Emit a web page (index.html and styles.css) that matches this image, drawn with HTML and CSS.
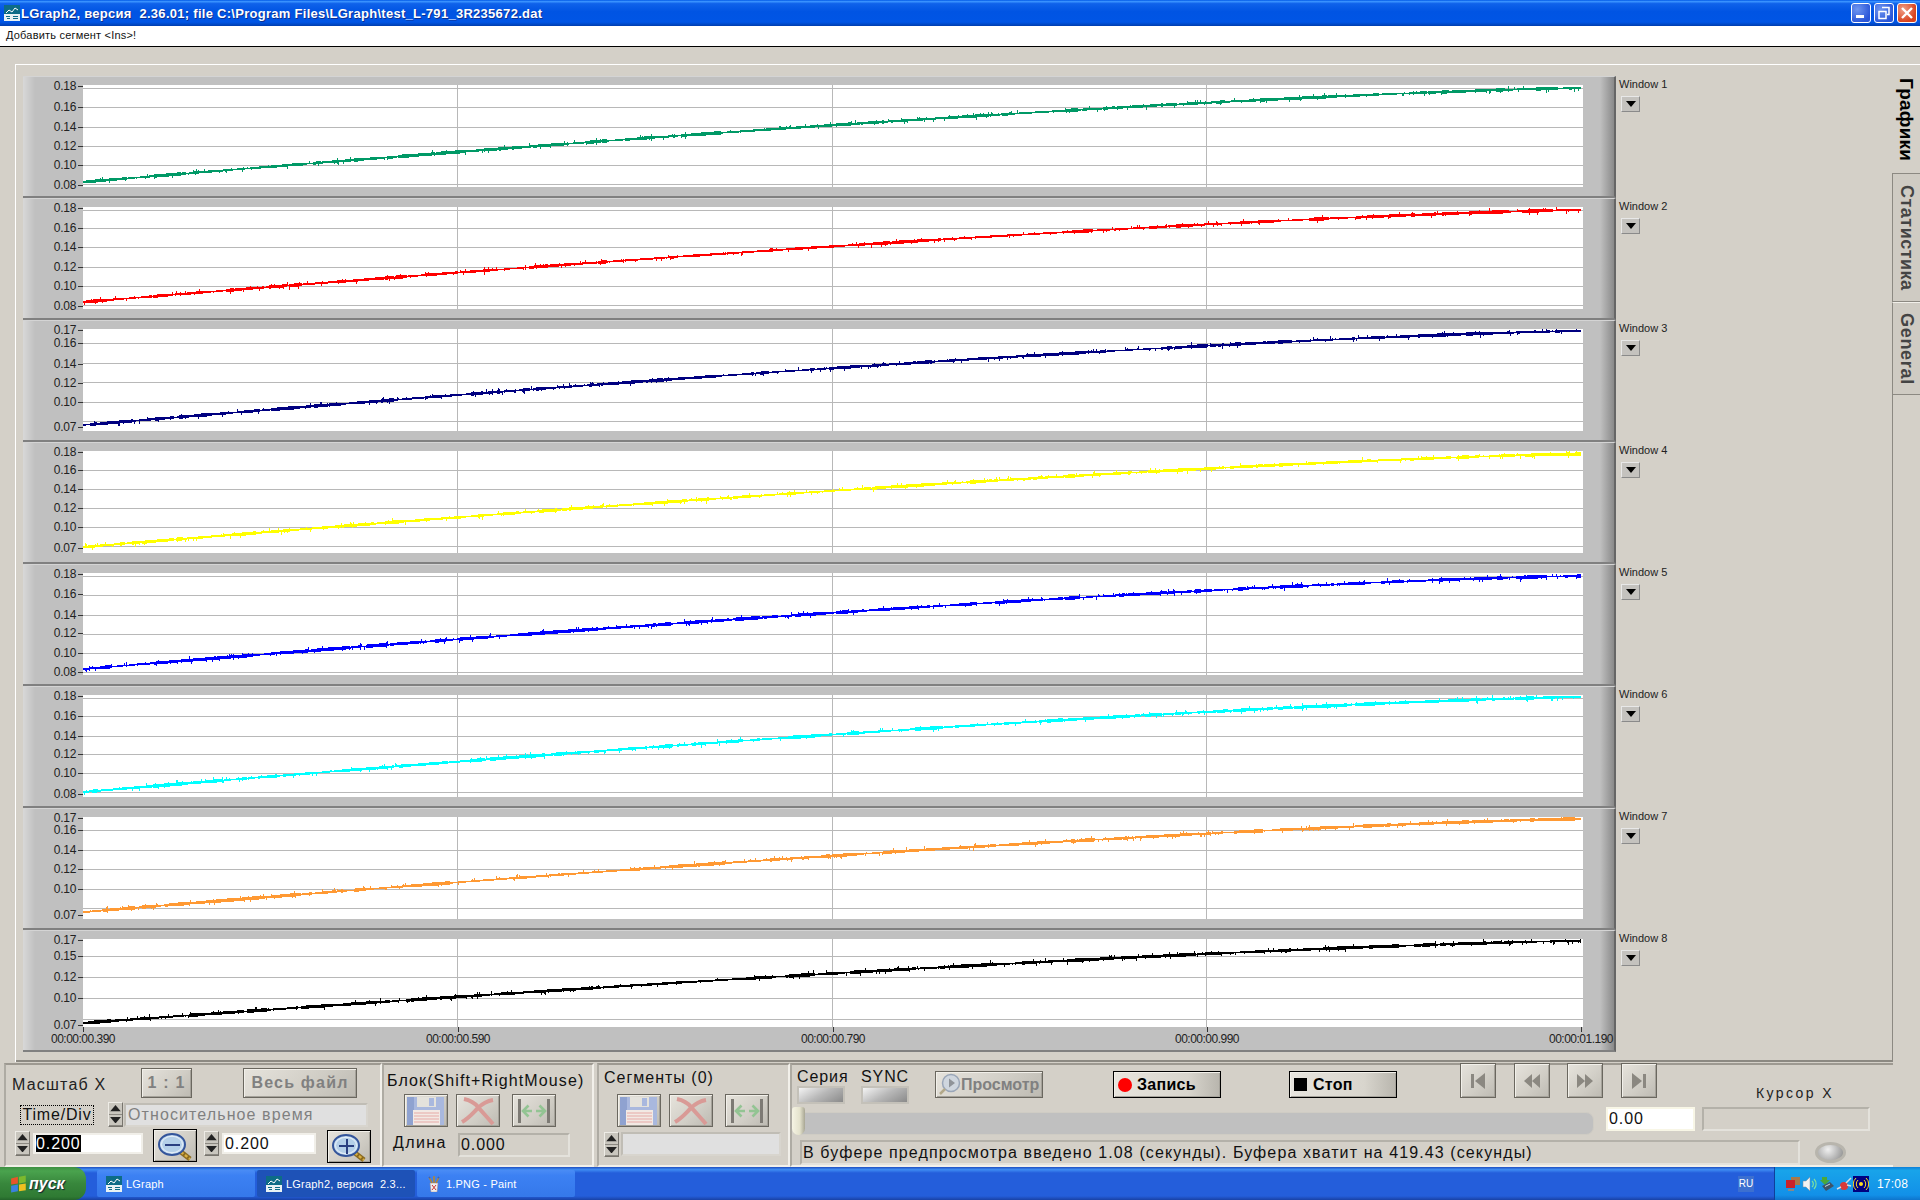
FILE: index.html
```html
<!DOCTYPE html>
<html lang="ru">
<head>
  <meta charset="UTF-8">
  <title>LGraph2</title>
  <link rel="stylesheet" href="styles.css">
</head>
<body>
  <!-- shared icons -->
  <svg class="icon-defs" width="0" height="0">
    <symbol id="app-icon" viewBox="0 0 16 16">
      <rect width="16" height="16" fill="#0d6c86"/>
      <rect y="9" width="16" height="7" fill="#e8f2f4"/>
      <path d="M2 8l3-3 3 2 3-4 3 2" fill="none" stroke="#fff" stroke-width="1"/>
      <path d="M3 2h1v1H3zM7 1h1v1H7zM11 1h2v1h-2zM2 11h4v1H2zM3 13h3v1H3zM9 11h5v1H9zM9 13h5v1H9z" fill="#0d6c86"/>
    </symbol>
    <symbol id="zoom-glass" viewBox="0 0 36 28">
      <path d="M23 19l9 7" stroke="#8a6a20" stroke-width="5"/>
      <path d="M23 19l9 7" stroke="#d9b040" stroke-width="2.4" stroke-dasharray="3 2"/>
      <ellipse cx="14" cy="11.500" rx="13" ry="10.500" fill="#c6dcf0" stroke="#34559b" stroke-width="2"/>
      <ellipse cx="14" cy="11.500" rx="10.500" ry="8.200" fill="#b4cfe8" stroke="#e6f0f8" stroke-width="1"/>
    </symbol>
    <symbol id="save-icon" viewBox="0 0 38 28">
      <rect x="1" y="0" width="36" height="28" fill="#a9b8de"/>
      <rect x="0" y="0" width="7" height="28" fill="#8fa2d0"/>
      <rect x="10" y="0" width="19" height="10" fill="#e4e2dc"/>
      <rect x="22" y="1" width="5" height="8" fill="#a9b8de"/>
      <rect x="6" y="13" width="27" height="15" fill="#f2e9e4"/>
      <path d="M7 16h25M7 19h25M7 22h25M7 25h25" stroke="#e6a9a6" stroke-width="1"/>
    </symbol>
    <symbol id="cancel-icon" viewBox="0 0 38 28">
      <path d="M5 2c5 1 10 3 14 8 5 6 10 11 15 17M3 25c7-4 10-8 16-14 4-4 9-7 15-8" fill="none" stroke="#d99a96" stroke-width="4"/>
    </symbol>
    <symbol id="span-icon" viewBox="0 0 38 28">
      <rect x="3" y="2" width="3" height="24" fill="#7d7a74"/>
      <rect x="32" y="2" width="3" height="24" fill="#7d7a74"/>
      <path d="M8 14h9M13.500 8.500L8 14l5.500 5.500M30 14h-9M24.500 8.500L30 14l-5.500 5.500" fill="none" stroke="#93c493" stroke-width="2.600"/>
    </symbol>
    <symbol id="tri-down" viewBox="0 0 10 6">
      <path d="M0 0h10L5 6z" fill="currentColor"/>
    </symbol>
    <symbol id="tri-up" viewBox="0 0 10 6">
      <path d="M5 0l5 6H0z" fill="currentColor"/>
    </symbol>
  </svg>

  <header class="titlebar">
    <svg class="title-icon"><use href="#app-icon"/></svg>
    <span class="title-text">LGraph2, версия  2.36.01; file C:\Program Files\LGraph\test_L-791_3R235672.dat</span>
    <div class="win-buttons">
      <button class="win-btn">
        <svg viewBox="0 0 18 18" width="18" height="18"><rect x="4" y="11" width="8" height="3" fill="#fff"/></svg>
      </button>
      <button class="win-btn">
        <svg viewBox="0 0 18 18" width="18" height="18"><path d="M7 3.500h7v7h-2M4 7.500h7v7H4z" fill="none" stroke="#fff" stroke-width="1.500"/></svg>
      </button>
      <button class="win-btn win-close">
        <svg viewBox="0 0 18 18" width="18" height="18"><path d="M4 4l10 10M14 4L4 14" stroke="#fff" stroke-width="2.400"/></svg>
      </button>
    </div>
  </header>
  <div class="hintbar">Добавить сегмент &lt;Ins&gt;!</div>

  <main class="workspace">
    <div class="tab-panel">
      <!-- rows are filled by charts.js -->
      <section class="plots" id="plots"></section>
      <nav class="tabs">
        <div class="tab tab-active">Графики</div>
        <div class="tab tab-stat">Статистика</div>
        <div class="tab tab-general">General</div>
        <div class="tab-rest"></div>
      </nav>
    </div>

    <div class="controls">
      <!-- X scale -->
      <div class="group group-scale">
        <div class="scale-row scale-top">
          <span class="big-label">Масштаб X</span>
          <button class="lv-btn gray-text btn-ratio">1 : 1</button>
          <button class="lv-btn gray-text btn-all">Весь файл</button>
        </div>
        <div class="scale-row scale-mid">
          <span class="time-div">Time/Div</span>
          <div class="spinner"><svg><use href="#tri-up"/></svg><svg><use href="#tri-down"/></svg></div>
          <div class="field field-gray field-time">Относительное время</div>
        </div>
        <div class="scale-row scale-bottom">
          <div class="spinner"><svg><use href="#tri-up"/></svg><svg><use href="#tri-down"/></svg></div>
          <div class="field field-white field-left"><span class="selected-text">0.200</span></div>
          <button class="lv-btn black-edge btn-zoom">
            <svg class="glass"><use href="#zoom-glass"/></svg>
            <span class="glass-sign glass-minus"></span>
          </button>
          <div class="spinner"><svg><use href="#tri-up"/></svg><svg><use href="#tri-down"/></svg></div>
          <div class="field field-white field-right">0.200</div>
          <button class="lv-btn black-edge btn-zoom btn-zoom-in">
            <svg class="glass"><use href="#zoom-glass"/></svg>
            <span class="glass-sign glass-plus"></span>
          </button>
        </div>
      </div>

      <!-- selection block -->
      <div class="group group-block">
        <div class="group-title">Блок(Shift+RightMouse)</div>
        <div class="icon-row">
          <button class="lv-btn icon-btn"><svg><use href="#save-icon"/></svg></button>
          <button class="lv-btn icon-btn"><svg><use href="#cancel-icon"/></svg></button>
          <button class="lv-btn icon-btn icon-btn-last"><svg><use href="#span-icon"/></svg></button>
        </div>
        <div class="length-row">
          <span class="length-label">Длина</span>
          <div class="field field-sunken">0.000</div>
        </div>
      </div>

      <!-- segments -->
      <div class="group group-segments">
        <div class="group-title">Сегменты (0)</div>
        <div class="icon-row">
          <button class="lv-btn icon-btn"><svg><use href="#save-icon"/></svg></button>
          <button class="lv-btn icon-btn"><svg><use href="#cancel-icon"/></svg></button>
          <button class="lv-btn icon-btn icon-btn-last"><svg><use href="#span-icon"/></svg></button>
        </div>
        <div class="segment-row">
          <div class="spinner"><svg><use href="#tri-up"/></svg><svg><use href="#tri-down"/></svg></div>
          <div class="field field-gray field-segment"></div>
        </div>
      </div>

      <!-- playback -->
      <div class="group group-play">
        <div class="play-top">
          <div class="indicator"><span>Серия</span><div class="led-rect"></div></div>
          <div class="indicator indicator-sync"><span>SYNC</span><div class="led-rect"></div></div>
          <button class="lv-btn gray-text btn-preview">
            <svg viewBox="0 0 24 24" width="24" height="24"><circle cx="14" cy="10" r="8.500" fill="#cfd6de" stroke="#9aa6b8" stroke-width="1.500"/><path d="M12 5.500l6 4.500-6 4.500z" fill="#8f9398"/><path d="M8 16l-5 5" stroke="#b3a98a" stroke-width="2.500"/></svg>
            <span>Просмотр</span>
          </button>
          <button class="lv-btn black-edge btn-action btn-record"><i class="rec-dot"></i>Запись</button>
          <button class="lv-btn black-edge btn-action btn-stop"><i class="stop-box"></i>Стоп</button>
          <div class="nav-buttons">
            <button class="lv-btn nav-btn"><svg viewBox="0 0 20 20" width="20" height="20"><path d="M3 3h3v14H3zM17 2v16L7 10z" fill="#8b8881"/></svg></button>
            <button class="lv-btn nav-btn"><svg viewBox="0 0 20 20" width="20" height="20"><path d="M10 3v14L2 10zM18 3v14l-8-7z" fill="#8b8881"/></svg></button>
            <button class="lv-btn nav-btn"><svg viewBox="0 0 20 20" width="20" height="20"><path d="M2 3v14l8-7zM10 3v14l8-7z" fill="#8b8881"/></svg></button>
            <button class="lv-btn nav-btn"><svg viewBox="0 0 20 20" width="20" height="20"><path d="M3 2v16l10-8zM14 3h3v14h-3z" fill="#8b8881"/></svg></button>
          </div>
          <div class="cursor-label">Курсор X</div>
        </div>
        <div class="play-mid">
          <div class="slider"><div class="slider-thumb"></div></div>
          <div class="field field-cream">0.00</div>
          <div class="field field-sunken field-cursor"></div>
        </div>
        <div class="play-bottom">
          <div class="field field-sunken field-status">В буфере предпросмотра введено 1.08 (секунды). Буфера хватит на 419.43 (секунды)</div>
          <div class="round-led"></div>
        </div>
      </div>
    </div>
  </main>

  <footer class="taskbar">
    <button class="start-btn">
      <svg viewBox="0 0 16 16" width="18" height="18">
        <path d="M1 3l6-1.500v6L1 8.500z" fill="#e8552a"/>
        <path d="M8 1.500l6-1v6l-6 1z" fill="#7cb92e"/>
        <path d="M1 9.500l6-1v6l-6 1z" fill="#3b82e0"/>
        <path d="M8 8.500l6-1v6l-6 1z" fill="#f0c020"/>
      </svg>
      <span>пуск</span>
    </button>
    <div class="task-list">
      <div class="task"><svg class="task-icon"><use href="#app-icon"/></svg>LGraph</div>
      <div class="task task-active"><svg class="task-icon"><use href="#app-icon"/></svg>LGraph2, версия  2.3...</div>
      <div class="task"><svg class="task-icon" viewBox="0 0 16 16">
          <path d="M4 7h8l-1 9H5z" fill="#eee" stroke="#a88" stroke-width="0.500"/>
          <path d="M6 9l4 5M10 9l-4 5" stroke="#c33" stroke-width="1"/>
          <path d="M6 7L3 1M8 7V0M10 7l3-6" stroke="#b8862c" stroke-width="1.500"/>
          <path d="M3 1l1 1M13 1l-1 1" stroke="#2a5fd0" stroke-width="1.500"/>
        </svg>1.PNG - Paint</div>
    </div>
    <span class="lang">RU</span>
    <div class="tray">
      <svg viewBox="0 0 16 16" width="16" height="16"><rect x="6" y="1" width="9" height="8" fill="#a8794a"/><rect x="1" y="4" width="9" height="8" fill="#c9222a"/><path d="M3 14h6" stroke="#888" stroke-width="2"/></svg>
      <svg viewBox="0 0 16 16" width="16" height="16"><path d="M1 5h3l4-4v14l-4-4H1z" fill="#f2f2f2" stroke="#7a8a9a" stroke-width="0.500"/><path d="M10 5a4 4 0 0 1 0 6M12 3a7 7 0 0 1 0 10" fill="none" stroke="#7ee0a0" stroke-width="1.200"/></svg>
      <svg viewBox="0 0 16 16" width="16" height="16"><path d="M3 1h5v3h3l-5 5-5-5h2z" fill="#4aa83a"/><path d="M3 10l8-4 4 4-8 5z" fill="#3e5468"/><path d="M6 10.500l5-2.500" stroke="#cdd" stroke-width="1"/></svg>
      <svg viewBox="0 0 16 16" width="16" height="16"><circle cx="8" cy="10" r="4" fill="#d83a3a"/><path d="M1 13l4-2M10 7l5-5M11 9l4 1" stroke="#d8dce2" stroke-width="1.500"/></svg>
      <svg viewBox="0 0 16 16" width="16" height="16"><rect width="16" height="16" fill="#000080"/><circle cx="8" cy="8" r="2" fill="#ffe020"/><path d="M5 4a5.500 5.500 0 0 0 0 8M11 4a5.500 5.500 0 0 1 0 8M3 2a8 8 0 0 0 0 12M13 2a8 8 0 0 1 0 12" fill="none" stroke="#ffe020" stroke-width="1"/></svg>
      <span class="clock">17:08</span>
    </div>
  </footer>

  <script src="charts.js"></script>
</body>
</html>
```

FILE: styles.css
```css
* {
  box-sizing: border-box;
}

html, body {
  margin: 0;
  height: 1200px;
  overflow: hidden;
}

body {
  display: flex;
  flex-direction: column;
  background: #d4d0c8;
  font-family: "Liberation Sans", Arial, sans-serif;
  color: #111;
}

button {
  font-family: inherit;
  padding: 0;
}

.icon-defs {
  position: absolute;
}

/* Window title */
.titlebar {
  height: 26px;
  display: flex;
  align-items: center;
  padding: 0 3px 0 4px;
  background: linear-gradient(#0058e6 0%, #3a93ff 6%, #0f62ea 14%, #0054e3 45%, #0055e5 85%, #0049c8 93%, #003dae 100%);
}

.title-icon {
  width: 16px;
  height: 16px;
}

.title-text {
  margin-left: 1px;
  color: #fff;
  font-size: 13px;
  font-weight: bold;
  letter-spacing: 0.28px;
  white-space: pre;
  text-shadow: 1px 1px 0 #0f2f90;
}

.win-buttons {
  margin-left: auto;
  display: flex;
  gap: 3px;
}

.win-btn {
  width: 20px;
  height: 20px;
  border: 1px solid #fff;
  border-radius: 3px;
  background: radial-gradient(circle at 30% 30%, #6f96f0, #2a56d8 75%);
  display: flex;
  align-items: center;
  justify-content: center;
}

.win-close {
  background: radial-gradient(circle at 30% 30%, #f0a088, #d9431f 70%);
}

.hintbar {
  height: 21px;
  padding: 1px 0 0 6px;
  background: #fff;
  border-bottom: 1px solid #000;
  font-size: 11px;
  letter-spacing: 0.2px;
  line-height: 16px;
}

.workspace {
  flex: 1;
  padding-top: 17px;
}

/* Tab control around the charts */
.tab-panel {
  height: 998px;
  margin-left: 15px;
  display: flex;
  border-top: 1px solid #fff;
  border-left: 1px solid #fff;
}

.plots {
  width: 1877px;
  padding: 11px 0 0 7px;
  border-bottom: 2px solid #8c8982;
}

.chart-row {
  display: flex;
  height: 122px;
}

.chart {
  position: relative;
  width: 1593px;
  height: 122px;
  background: linear-gradient(90deg, #d8d8d8 0, #c0c0c0 12px, #c0c0c0 calc(100% - 14px), #8a8a8a 100%);
  border-top: 1px solid #d4d4d4;
  border-right: 2px solid #666;
  border-bottom: 2px solid #808080;
}

.plot {
  position: absolute;
  left: 60px;
  top: 8px;
  width: 1500px;
  height: 102px;
  background: #fff;
}

.plot-last {
  height: 88px;
}

.plot svg {
  display: block;
}

.y-tick {
  position: absolute;
  right: 100%;
  transform: translateY(-50%);
  display: flex;
  align-items: center;
  gap: 2px;
  font-size: 12px;
  letter-spacing: -0.3px;
  line-height: 14px;
  color: #222;
}

.y-tick::after {
  content: "";
  width: 5px;
  height: 1px;
  background: #333;
}

.x-tick {
  position: absolute;
  top: 100%;
  width: 1px;
  height: 5px;
  background: #333;
}

.x-label {
  position: absolute;
  top: 100%;
  margin-top: 5px;
  transform: translateX(-50%);
  font-size: 12px;
  letter-spacing: -0.5px;
  line-height: 14px;
  color: #222;
}

.chart-side {
  padding: 0 0 0 3px;
}

.chart-name {
  font-size: 11px;
  line-height: 14px;
  margin-top: 1px;
  color: #222;
}

.chart-menu {
  display: flex;
  align-items: center;
  justify-content: center;
  width: 19px;
  height: 16px;
  margin: 5px 0 0 2px;
  color: #000;
  background: #c4c2be;
  border: 1px solid;
  border-color: #e8e8e8 #8a8a8a #8a8a8a #e8e8e8;
}

.chart-menu svg {
  width: 10px;
  height: 6px;
}

/* Tabs on the right edge */
.tabs {
  flex: 1;
  display: flex;
  flex-direction: column;
}

.tab {
  writing-mode: vertical-rl;
  font-weight: bold;
  font-size: 18px;
  line-height: 27px;
  text-align: center;
  color: #444;
  background: #cfcbc3;
  border: 1px solid #8c8982;
  border-right: 0;
}

.tab-active {
  height: 108px;
  padding: 13px 0 0 1px;
  text-align: start;
  color: #000;
  background: none;
  border: 0;
  font-size: 19px;
  letter-spacing: 0.2px;
}

.tab-stat {
  height: 129px;
  letter-spacing: 0.5px;
}

.tab-general {
  height: 93px;
  letter-spacing: 0.7px;
  border-top-color: #f2f0ea;
}

.tab-rest {
  flex: 1;
  border-left: 1px solid #8c8982;
}

/* Bottom control groups */
.controls {
  display: flex;
  height: 105px;
  padding: 1px 0 0 4px;
}

.group {
  height: 104px;
  border: 2px solid;
  border-color: #9d9991 #f2f0ea #f2f0ea #aeaba3;
}

.group-scale {
  width: 378px;
}

.group-block {
  width: 212px;
  padding: 2px 0 0 5px;
}

.group-segments {
  width: 193px;
  margin-left: 3px;
  padding: 1px 0 0 5px;
}

.group-play {
  flex: 1;
  margin-right: 27px;
  border-right: 0;
  padding-left: 5px;
}

.scale-row {
  display: flex;
  align-items: center;
}

.scale-top {
  height: 30px;
  margin-top: 3px;
  padding-left: 6px;
}

.big-label {
  width: 129px;
  margin-top: 4px;
  font-size: 16px;
  letter-spacing: 1.2px;
  color: #222;
}

.lv-btn {
  height: 100%;
  background: linear-gradient(135deg, #e6e3dc, #d0cdc5 60%, #bdbab2);
  border: 1px solid #6a675f;
  box-shadow: inset 1px 1px 0 #f2f0ea, inset -1px -1px 0 #a5a29a;
  color: #000;
}

.gray-text {
  font-weight: bold;
  color: #808080;
  font-size: 16px;
  letter-spacing: 1.2px;
}

.black-edge {
  border-color: #000;
}

.btn-ratio {
  width: 51px;
}

.btn-all {
  width: 114px;
  margin-left: 51px;
}

.scale-mid {
  height: 25px;
  margin-top: 4px;
  padding-left: 14px;
}

.time-div {
  width: 74px;
  height: 20px;
  border: 1px dotted #000;
  font-size: 16px;
  letter-spacing: 0.8px;
  line-height: 18px;
  text-align: center;
  white-space: nowrap;
  margin-right: 14px;
}

.spinner {
  display: flex;
  flex-direction: column;
  flex: none;
  width: 15px;
  height: 25px;
  color: #222;
  background: #c9c6be;
  border: 1px solid;
  border-color: #eeece6 #77746d #77746d #eeece6;
}

.spinner svg {
  flex: 1;
  width: 100%;
  height: 50%;
  padding: 2px 1px;
  border-bottom: 1px solid #8c8982;
}

.field {
  height: 24px;
  font-size: 16px;
  line-height: 20px;
  padding-left: 1px;
  letter-spacing: 0.9px;
  border: 2px solid;
  white-space: nowrap;
}

.field-gray {
  background: #e0e0e0;
  color: #808080;
  border-color: #c0bdb5 #d8d5ce #d8d5ce #c0bdb5;
}

.field-white {
  background: #fff;
  border-color: #f1efe9;
  height: 21px;
  line-height: 17px;
}

.field-sunken {
  background: #d4d0c8;
  border-color: #b4b1a9 #e4e2dc #e4e2dc #b4b1a9;
}

.field-time {
  width: 244px;
  margin-left: 1px;
  padding-left: 2px;
  letter-spacing: 1.1px;
}

.scale-bottom {
  height: 34px;
  margin-top: 2px;
  padding-left: 9px;
  align-items: flex-start;
}

.scale-bottom .spinner {
  margin-top: 2px;
}

.field-left {
  width: 110px;
  margin: 4px 10px 0 3px;
}

.field-right {
  width: 94px;
  margin: 4px 11px 0 3px;
}

.selected-text {
  display: inline-block;
  background: #000;
  color: #fff;
}

.btn-zoom {
  position: relative;
  width: 44px;
  height: 33px;
  margin-right: 7px;
}

.btn-zoom-in {
  margin-top: 1px;
}

.glass {
  position: absolute;
  left: 4px;
  top: 3px;
  width: 36px;
  height: 28px;
}

.glass-sign {
  position: absolute;
  left: 11px;
  top: 14px;
  width: 15px;
  height: 2px;
  background: #2a3f80;
}

.glass-plus::after {
  content: "";
  position: absolute;
  left: 6.500px;
  top: -6.500px;
  width: 2px;
  height: 15px;
  background: #2a3f80;
}

.group-title {
  font-size: 16px;
  line-height: 20px;
  height: 24px;
  letter-spacing: 1.1px;
  white-space: nowrap;
  color: #111;
}

.group-block .group-title {
  margin: 4px 0 -1px -2px;
}

.group-segments .group-title {
  margin-top: 2px;
  padding-left: 0;
  height: 26px;
  letter-spacing: 1px;
}

.icon-row {
  display: flex;
  height: 33px;
  padding-left: 13px;
}

.group-block .icon-row {
  padding-left: 15px;
}

.icon-btn {
  width: 44px;
  margin-right: 8px;
  padding: 2px;
  display: flex;
  align-items: center;
  justify-content: center;
}

.icon-btn svg {
  width: 38px;
  height: 28px;
}

.icon-btn-last {
  margin-left: 4px;
}

.length-row {
  display: flex;
  align-items: center;
  margin-top: 6px;
}

.length-label {
  width: 69px;
  padding-left: 4px;
  font-size: 16px;
  letter-spacing: 1.4px;
  margin-top: -5px;
}

.length-row .field {
  width: 112px;
}

.segment-row {
  display: flex;
  margin-top: 5px;
  padding-left: 0;
}

.field-segment {
  width: 160px;
  margin-left: 2px;
}

.play-top {
  position: relative;
  display: flex;
  height: 42px;
  padding-top: 6px;
}

.indicator {
  width: 64px;
  font-size: 16px;
  letter-spacing: 0.9px;
  margin-top: -3px;
}

.indicator span {
  display: block;
  line-height: 17px;
}

.indicator-sync {
  width: 74px;
}

.led-rect {
  width: 48px;
  height: 18px;
  margin-top: 1px;
  border: 2px solid #c4c1b9;
  background: linear-gradient(150deg, #f4f4f4, #b8b8b8 50%, #8a8a8a);
}

.btn-preview,
.btn-action {
  height: 27px;
  width: 108px;
  display: flex;
  align-items: center;
}

.btn-preview {
  letter-spacing: 0;
  font-size: 16px;
  gap: 0;
  overflow: hidden;
}

.btn-preview svg {
  margin-left: 1px;
  flex: none;
}

.btn-action {
  font-weight: bold;
  font-size: 16px;
  letter-spacing: 0.3px;
  padding-left: 3px;
  background: linear-gradient(90deg, #e8e5de, #d8d5cd 70%, #b8b5ad);
}

.btn-record {
  margin-left: 70px;
}

.btn-stop {
  margin-left: 68px;
}

.rec-dot {
  width: 14px;
  height: 14px;
  margin: 0 5px 0 1px;
  border-radius: 50%;
  background: #f00;
}

.stop-box {
  width: 13px;
  height: 13px;
  margin: 0 6px 0 1px;
  background: #000;
}

.nav-buttons {
  display: flex;
  gap: 17.500px;
  height: 35px;
  margin: -8px 0 0 63px;
}

.nav-btn {
  width: 36px;
  display: flex;
  align-items: center;
  justify-content: center;
}

.cursor-label {
  position: absolute;
  left: 959px;
  top: 20px;
  font-size: 14px;
  letter-spacing: 2.4px;
  white-space: nowrap;
  color: #222;
}

.play-mid {
  display: flex;
  align-items: flex-start;
  height: 34px;
}

.slider {
  position: relative;
  width: 797px;
  height: 23px;
  margin: 5px 0 0 0;
  background: #c0c0c0;
  border-radius: 0 8px 8px 0;
  border: 1px solid #cfccc4;
}

.slider-thumb {
  position: absolute;
  left: -6px;
  top: -6px;
  width: 13px;
  height: 28px;
  border-radius: 4px 4px 8px 8px;
  background: linear-gradient(90deg, #f6f4e4, #e4e2cc 60%, #a8a694);
}

.field-cream {
  width: 89px;
  height: 24px;
  line-height: 20px;
  margin-left: 12px;
  background: #fff;
  border-color: #f8f6e6;
}

.field-cursor {
  width: 168px;
  margin-left: 7px;
}

.play-bottom {
  display: flex;
  align-items: center;
  margin-top: -1px;
  padding-left: 3px;
}

.field-status {
  width: 1000px;
  height: 25px;
  line-height: 21px;
  letter-spacing: 1.11px;
}

.round-led {
  width: 31px;
  height: 21px;
  margin-left: 15px;
  border-radius: 50%;
  background: radial-gradient(circle at 40% 30%, #f0f0f0, #a8a8a8 70%, #888);
  border: 3px solid #b8b5ad;
}

/* Windows taskbar */
.taskbar {
  height: 33px;
  display: flex;
  align-items: center;
  background: linear-gradient(#1f4fc0 0, #3f8cf3 8%, #245edb 18%, #245edb 88%, #1941a5 100%);
  color: #fff;
  font-size: 11px;
}

.start-btn {
  width: 86px;
  height: 33px;
  display: flex;
  align-items: center;
  gap: 1px;
  padding-left: 10px;
  border: 0;
  border-radius: 0 12px 12px 0;
  background: linear-gradient(#3d8f42 0, #4aa34e 12%, #38873c 50%, #2f7a33 90%, #23642a 100%);
  color: #fff;
  font-size: 16px;
  font-weight: bold;
  font-style: italic;
  text-shadow: 1px 1px 1px #123;
}

.task-list {
  display: flex;
  gap: 2px;
  margin-left: 11px;
}

.task {
  width: 158px;
  height: 27px;
  display: flex;
  align-items: center;
  gap: 4px;
  padding-left: 9px;
  border-radius: 2px;
  background: linear-gradient(#4a8cf5, #3c81f3 20%, #3578ea);
  white-space: pre;
  letter-spacing: 0.2px;
}

.task-active {
  background: #1e52b7;
}

.task-icon {
  width: 16px;
  height: 16px;
  flex: none;
}

.lang {
  margin-left: auto;
  width: 16px;
  height: 16px;
  line-height: 16px;
  text-align: center;
  background: #3c6fd0;
  font-size: 10px;
}

.tray {
  width: 146px;
  height: 33px;
  margin-left: 20px;
  display: flex;
  align-items: center;
  gap: 1px;
  padding-left: 10px;
  border-left: 1px solid #0f3f9a;
  background: linear-gradient(#0c7fd8, #18a4ea 10%, #1290e8 85%, #0e74cc);
}

.clock {
  margin-left: 7px;
  font-size: 12px;
  letter-spacing: 0.2px;
}
```

FILE: charts.js
```js
// Eight stacked channel plots. Offsets are px from the top of each plot.
const rows = [
  { color: '#009966', y0: 97, y1: 3, grid: [3, 22, 42, 61, 80, 99],
    ticks: [['0.18', 1], ['0.16', 22], ['0.14', 42], ['0.12', 61], ['0.10', 80], ['0.08', 100]] },
  { color: '#ff0000', y0: 95, y1: 3, grid: [3, 21, 40, 60, 79, 98],
    ticks: [['0.18', 1], ['0.16', 21], ['0.14', 40], ['0.12', 60], ['0.10', 79], ['0.08', 99]] },
  { color: '#000080', y0: 96, y1: 2, grid: [14, 34, 53, 73, 92],
    ticks: [['0.17', 1], ['0.16', 14], ['0.14', 35], ['0.12', 54], ['0.10', 73], ['0.07', 98]] },
  { color: '#ffff00', y0: 96, y1: 3, grid: [19, 38, 57, 76, 95],
    ticks: [['0.18', 1], ['0.16', 19], ['0.14', 38], ['0.12', 57], ['0.10', 76], ['0.07', 97]] },
  { color: '#0000ff', y0: 96, y1: 3, grid: [3, 22, 42, 61, 80, 99],
    ticks: [['0.18', 1], ['0.16', 21], ['0.14', 42], ['0.12', 60], ['0.10', 80], ['0.08', 99]] },
  { color: '#00ffff', y0: 97, y1: 2, grid: [3, 21, 41, 59, 78, 97],
    ticks: [['0.18', 1], ['0.16', 21], ['0.14', 41], ['0.12', 59], ['0.10', 78], ['0.08', 99]] },
  { color: '#ff9933', y0: 95, y1: 2, grid: [13, 33, 52, 72, 91],
    ticks: [['0.17', 1], ['0.16', 13], ['0.14', 33], ['0.12', 52], ['0.10', 72], ['0.07', 98]] },
  { color: '#000000', y0: 84, y1: 2, grid: [17, 38, 59, 80],
    ticks: [['0.17', 1], ['0.15', 17], ['0.12', 38], ['0.10', 59], ['0.07', 86]] }
];

const PLOT_WIDTH = 1500;
const timeLabels = [
  ['00:00:00.390', 0], ['00:00:00.590', 375], ['00:00:00.790', 750],
  ['00:00:00.990', 1124], ['00:00:01.190', 1498]
];

// Small seeded generator so the noise is the same on every load
function randomFrom(seed) {
  return () => {
    seed = (seed + 0x6d2b79f5) | 0;
    let t = Math.imul(seed ^ (seed >>> 15), 1 | seed);
    t = (t + Math.imul(t ^ (t >>> 7), 61 | t)) ^ t;
    return ((t ^ (t >>> 14)) >>> 0) / 4294967296;
  };
}

function tracePath(row, seed) {
  const rand = randomFrom(seed);
  let d = '';
  let band = 1;
  for (let x = 0; x < PLOT_WIDTH - 2; x++) {
    const t = x / PLOT_WIDTH;
    const y = row.y0 + (row.y1 - row.y0) * (1 - Math.pow(1 - t, 1.34));
    if (rand() < 0.12) band = 0.7 + rand() * 1.1;
    let up = band;
    let down = band;
    if (rand() < 0.07) up += rand() * 2.5;
    if (rand() < 0.07) down += rand() * 2.5;
    d += `M${x}.5 ${Math.round(y - up)}V${Math.round(y + down)}`;
  }
  return d;
}

function plotSvg(row, height, seed) {
  let lines = '';
  row.grid.forEach((y) => {
    lines += `<path d="M0 ${y}.5H${PLOT_WIDTH}"/>`;
  });
  [374, 749, 1123].forEach((x) => {
    lines += `<path d="M${x}.5 0V${height}"/>`;
  });
  return `<svg width="${PLOT_WIDTH}" height="${height}" shape-rendering="crispEdges">` +
    `<g stroke="#b8b8b8" fill="none">${lines}</g>` +
    `<path d="${tracePath(row, seed)}" stroke="${row.color}" fill="none"/></svg>`;
}

const plots = document.getElementById('plots');

rows.forEach((row, index) => {
  const isLast = index === rows.length - 1;
  const height = isLast ? 88 : 102;
  const ticks = row.ticks
    .map(([label, y]) => `<div class="y-tick" style="top:${y}px">${label}</div>`)
    .join('');
  let axis = '';
  if (isLast) {
    axis = timeLabels
      .map(([label, x]) => `<div class="x-tick" style="left:${x}px"></div>` +
        `<div class="x-label" style="left:${x}px">${label}</div>`)
      .join('');
  }
  const el = document.createElement('div');
  el.className = 'chart-row';
  el.innerHTML = `
    <div class="chart">
      <div class="plot${isLast ? ' plot-last' : ''}">${ticks}${plotSvg(row, height, index + 11)}${axis}</div>
    </div>
    <div class="chart-side">
      <div class="chart-name">Window ${index + 1}</div>
      <div class="chart-menu"><svg><use href="#tri-down"/></svg></div>
    </div>`;
  plots.appendChild(el);
});
```
